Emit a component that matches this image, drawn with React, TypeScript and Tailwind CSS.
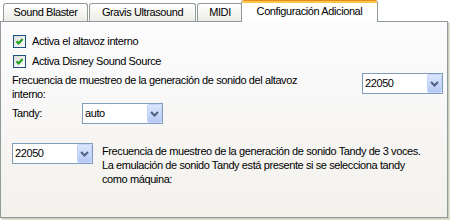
import React from "react";

function Chevron() {
  return (
    <svg width="9" height="6" viewBox="0 0 9 6">
      <path d="M1 1 L4.5 4.5 L8 1" fill="none" stroke="#4d6185" strokeWidth="2" />
    </svg>
  );
}

function Combo({ value, className = "" }: { value: string; className?: string }) {
  return (
    <div className={"flex h-[21px] w-[81px] shrink-0 border border-[#7f9db9] bg-white " + className}>
      <div className="flex flex-1 items-center pl-[2px] leading-none">{value}</div>
      <div className="flex w-[15px] items-center justify-center rounded-[2px] border border-[#c2d3fc] bg-gradient-to-b from-[#dde7fe] to-[#b4c8f4]">
        <Chevron />
      </div>
    </div>
  );
}

function Check({ label }: { label: string }) {
  return (
    <div className="flex h-[20px] items-center">
      <div className="ml-[1px] flex h-[13px] w-[13px] items-center justify-center border border-[#1c5180] bg-gradient-to-br from-[#dcdcd7] to-white">
        <svg width="9" height="9" viewBox="0 0 9 9">
          <path d="M1.5 4.2 L3.6 6.4 L7.6 2" fill="none" stroke="#21a121" strokeWidth="2.2" />
        </svg>
      </div>
      <span className="ml-[6px]">{label}</span>
    </div>
  );
}

function Tab({ label, className = "" }: { label: string; className?: string }) {
  return (
    <div
      className={
        "flex h-[18px] items-center justify-center rounded-t-[3px] border border-b-0 border-[#919b9c] bg-gradient-to-b from-white to-[#ecebe5] pb-[1px] " +
        className
      }
    >
      {label}
    </div>
  );
}

export default function App() {
  return (
    <div className="h-[221px] w-[451px] overflow-hidden bg-white font-['Liberation_Sans',Arial,sans-serif] text-[11px] tracking-[-0.4px] text-black">
      <div className="flex h-[21px] items-end">
        <Tab label="Sound Blaster" className="ml-[3px] w-[85px]" />
        <Tab label="Gravis Ultrasound" className="ml-[1px] w-[107px]" />
        <Tab label="MIDI" className="ml-[1px] w-[46px]" />
        <div className="relative z-10 -mb-[1px] ml-[-2px] flex h-[22px] w-[137px] flex-col overflow-hidden rounded-t-[3px] border-x border-[#919b9c] bg-white">
          <div className="h-[1px] bg-[#e68b2c]" />
          <div className="h-[2px] bg-[#ffc73c]" />
          <div className="flex flex-1 items-center justify-center pb-[2px]">Configuración Adicional</div>
        </div>
      </div>
      <div className="flex h-[197px] w-[448px] flex-col border border-[#919b9c] bg-gradient-to-b from-[#fcfcfe] to-[#f3f1ec] pl-[11px] pr-[4px] shadow-[1px_1px_0_#d0cdbd,2px_2px_0_#e2e0d3]">
        <div className="pt-[9px]">
          <Check label="Activa el altavoz interno" />
          <Check label="Activa Disney Sound Source" />
        </div>
        <div className="mt-[2px] flex">
          <div className="flex-1 leading-[14px]">
            Frecuencia de muestreo de la generación de sonido del altavoz
            <br />
            interno:
          </div>
          <Combo value="22050" />
        </div>
        <div className="mt-[2px] flex items-center">
          <div className="w-[70px]">Tandy:</div>
          <Combo value="auto" />
        </div>
        <div className="mt-[19px] flex">
          <Combo value="22050" />
          <div className="ml-[9px] mt-[1px] whitespace-nowrap leading-[14px]">
            Frecuencia de muestreo de la generación de sonido Tandy de 3 voces.
            <br />
            La emulación de sonido Tandy está presente si se selecciona tandy
            <br />
            como máquina:
          </div>
        </div>
      </div>
    </div>
  );
}
